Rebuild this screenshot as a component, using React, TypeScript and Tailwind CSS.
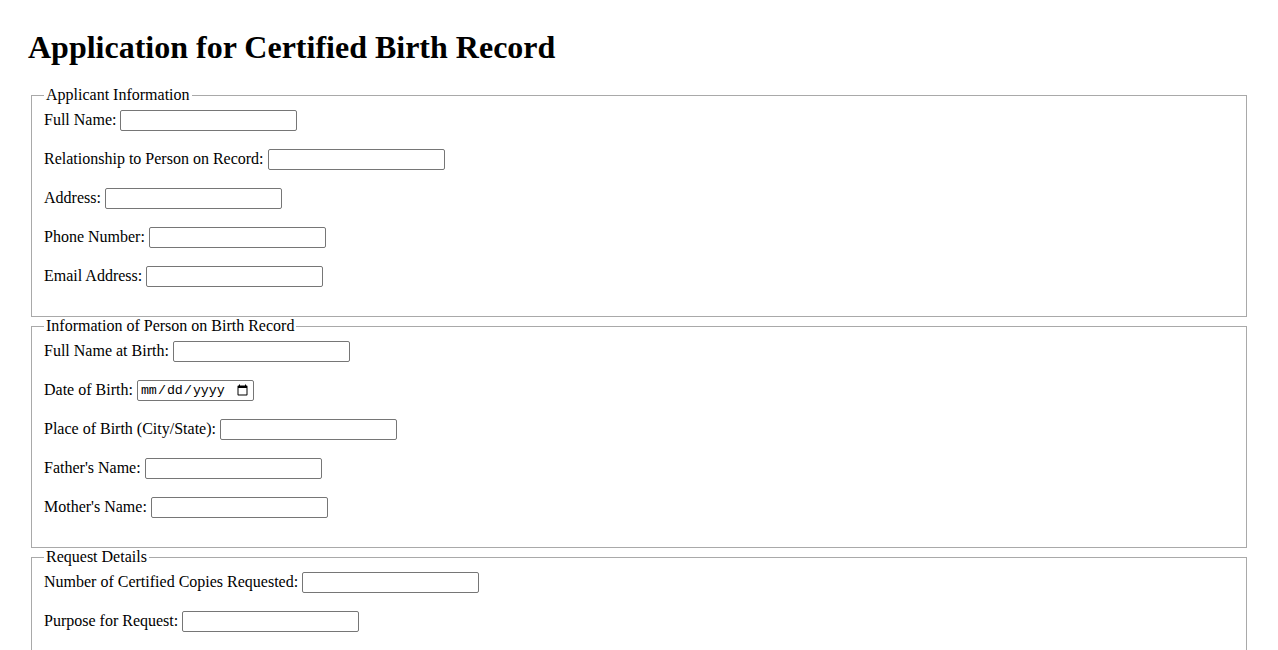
import React from "react";

interface FieldProps {
    label: string;
    type?: string;
}

const Field: React.FC<FieldProps> = ({ label, type = "text" }) => {
    const isDate = type === "date";
    return (
        <div className="flex items-center gap-[4px] h-[21px] mb-[18px]">
            <label className="leading-[19px] pb-[2px]">{label}</label>
            <input
                type={type}
                className={
                    isDate
                        ? "w-[117px] h-[21px] border border-[#767676] rounded-[2px] px-[2px] bg-white text-[13.33px] font-['Liberation_Mono',monospace] text-black"
                        : "w-[177px] h-[21px] border border-[#767676] rounded-[2px] px-[2px] bg-white text-[13.33px] font-['Liberation_Sans',Arial,sans-serif]"
                }
            />
        </div>
    );
};

interface SectionProps {
    title: string;
    fields: FieldProps[];
}

const Section: React.FC<SectionProps> = ({ title, fields }) => (
    <fieldset className="mx-[3px] px-[12px] pt-[6px] pb-[11px] border border-[#a9a9a9]">
        <legend className="px-[2px] leading-[18px]">{title}</legend>
        {fields.map((f) => (
            <Field key={f.label} label={f.label} type={f.type} />
        ))}
    </fieldset>
);

export default function App() {
    return (
        <div className="min-h-[650px] bg-white text-black px-[28px] pt-[29px] text-[16px] font-['Liberation_Serif','Times_New_Roman',serif]">
            <h1 className="text-[32px] leading-[37px] font-bold mb-[20px]">
                Application for Certified Birth Record
            </h1>
            <form>
                <Section
                    title="Applicant Information"
                    fields={[
                        { label: "Full Name:" },
                        { label: "Relationship to Person on Record:" },
                        { label: "Address:" },
                        { label: "Phone Number:", type: "tel" },
                        { label: "Email Address:", type: "email" },
                    ]}
                />
                <Section
                    title="Information of Person on Birth Record"
                    fields={[
                        { label: "Full Name at Birth:" },
                        { label: "Date of Birth:", type: "date" },
                        { label: "Place of Birth (City/State):" },
                        { label: "Father's Name:" },
                        { label: "Mother's Name:" },
                    ]}
                />
                <Section
                    title="Request Details"
                    fields={[
                        { label: "Number of Certified Copies Requested:" },
                        { label: "Purpose for Request:" },
                    ]}
                />
            </form>
        </div>
    );
}
